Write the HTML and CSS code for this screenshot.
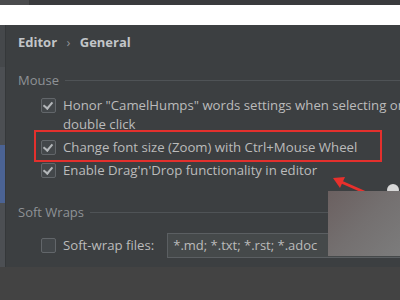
FILE: index.html
```html
<!DOCTYPE html>
<html lang="en">
<head>
  <meta charset="UTF-8">
  <title>Editor - General</title>
  <link rel="stylesheet" href="styles.css">
</head>
<body>
  <div class="topbar"><div class="topbar-left"></div></div>
  <div class="gap"></div>
  <div class="panel">
    <div class="side">
      <div class="side-dark"></div>
      <div class="side-light"></div>
      <div class="side-sel"></div>
      <div class="side-light grow"></div>
    </div>
    <div class="content">
      <div class="crumbs">Editor <span class="sep">›</span> General</div>

      <div class="group-title"><span>Mouse</span><div class="line"></div></div>
      <div class="rows">
        <div class="row">
          <span class="cb checked"></span>
          <span class="label">Honor "CamelHumps" words settings when selecting on<br>double click</span>
        </div>
        <div class="row">
          <span class="cb checked"></span>
          <span class="label">Change font size (Zoom) with Ctrl+Mouse Wheel</span>
        </div>
        <div class="row">
          <span class="cb checked"></span>
          <span class="label">Enable Drag'n'Drop functionality in editor</span>
        </div>
      </div>

      <div class="group-title soft"><span>Soft Wraps</span><div class="line"></div></div>
      <div class="row field-row">
        <span class="cb"></span>
        <span class="label">Soft-wrap files:</span>
        <div class="input">*.md; *.txt; *.rst; *.adoc</div>
      </div>
    </div>
  </div>
  <div class="bottom"></div>

  <!-- annotation overlays -->
  <div class="highlight"></div>
  <svg class="arrow" width="60" height="30" viewBox="0 0 60 30">
    <line x1="8" y1="5" x2="40" y2="19" stroke="#e8302c" stroke-width="3"/>
    <polygon points="2,2 14,1 9,12" fill="#e8302c"/>
  </svg>
  <div class="knob"></div>
  <div class="blur"></div>
</body>
</html>
```

FILE: styles.css
```css
body {
  margin: 0;
  width: 400px;
  height: 300px;
  overflow: hidden;
  position: relative;
  font-family: "Open Sans", "Noto Sans", sans-serif;
  background-color: #434343;
  color: #bbbbbb;
}
.topbar {
  height: 5px;
  background-color: #3a3b3d;
}
.topbar-left {
  width: 29px;
  height: 5px;
  background-color: #4a4b4d;
}
.gap {
  height: 20px;
  background-color: #ffffff;
}
.panel {
  display: flex;
  height: 242px;
  overflow: hidden;
  background-color: #3c3f41;
}
.side {
  width: 5px;
  flex-shrink: 0;
  display: flex;
  flex-direction: column;
  border-right: 1px solid #35383a;
}
.side-dark {
  height: 42px;
  background-color: #45484b;
}
.side-light {
  height: 78px;
  background-color: #4c4f53;
}
.side-sel {
  height: 58px;
  background-color: #4b6394;
}
.grow {
  flex: 1;
}
.content {
  flex: 1;
  min-width: 0;
  padding: 0 0 0 12px;
  font-size: 13px;
}
.crumbs {
  height: 34px;
  line-height: 34px;
  font-weight: bold;
  color: #c2c5c8;
}
.crumbs .sep {
  font-weight: normal;
  color: #8d9094;
  margin: 0 6px;
}
.group-title {
  display: flex;
  align-items: center;
  gap: 6px;
  height: 20px;
  margin-top: 11px;
  color: #8e9296;
}
.group-title .line {
  flex: 1;
  height: 1px;
  background-color: #4f5356;
}
.group-title.soft {
  margin-top: 22px;
}
.rows {
  display: flex;
  flex-direction: column;
  gap: 4px;
  padding-top: 6px;
}
.row {
  display: flex;
  align-items: flex-start;
  gap: 7px;
  padding-left: 23px;
  line-height: 19px;
}
.cb {
  width: 13px;
  height: 13px;
  margin-top: 2px;
  flex-shrink: 0;
  border: 1px solid #62666a;
  border-radius: 2px;
  background-color: #43474a;
  position: relative;
}
.cb.checked:after {
  content: "";
  position: absolute;
  left: 3px;
  top: 1px;
  width: 4px;
  height: 7px;
  border: solid #b4b7ba;
  border-width: 0 2px 2px 0;
  transform: rotate(40deg);
}
.label {
  color: #bbbbbb;
  white-space: nowrap;
  font-size: 13.2px;
}
.field-row {
  align-items: center;
  margin-top: 11px;
}
.field-row .cb {
  margin-top: 0;
}
.input {
  margin-left: 6px;
  width: 260px;
  flex-shrink: 0;
  height: 23px;
  line-height: 23px;
  padding-left: 5px;
  border: 1px solid #5b5f62;
  background-color: #45494a;
  color: #bbbbbb;
}
.bottom {
  height: 33px;
  background-color: #434343;
}
.highlight {
  position: absolute;
  left: 34px;
  top: 130px;
  width: 344px;
  height: 28px;
  border: 2px solid #e3302d;
}
.arrow {
  position: absolute;
  left: 331px;
  top: 176px;
}
.knob {
  position: absolute;
  left: 387px;
  top: 184px;
  width: 12px;
  height: 12px;
  border-radius: 50%;
  background-color: #d8d8d8;
}
.blur {
  position: absolute;
  left: 328px;
  top: 191px;
  width: 72px;
  height: 65px;
  background: linear-gradient(135deg, #6b6060 0%, #747070 50%, #7c7c7c 100%);
}
```
